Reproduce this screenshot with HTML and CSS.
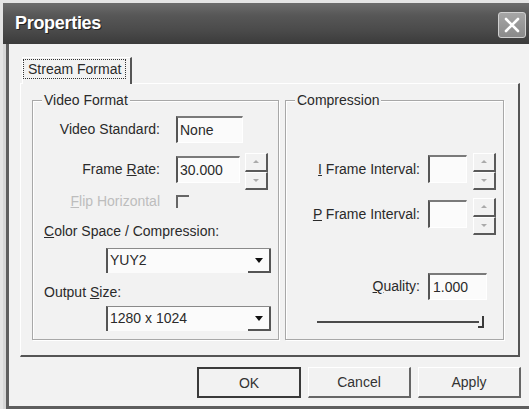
FILE: index.html
```html
<!DOCTYPE html>
<html>
<head>
<meta charset="utf-8">
<title>Properties</title>
<link rel="stylesheet" href="styles.css">
</head>
<body>
<div class="window">
  <div class="titlebar">
    <span class="title">Properties</span>
    <span class="close"><svg width="18" height="16" viewBox="0 0 18 16"><path d="M3 2 L15 14 M15 2 L3 14" stroke="#fff" stroke-width="2.6" stroke-linecap="round"/></svg></span>
  </div>
  <div class="client">
    <div class="tab"><span class="focus">Stream Format</span></div>
    <div class="panel">
      <div class="group video">
        <div class="group-title">Video Format</div>
        <div class="row r1"><span class="lbl">Video Standard:</span><span class="field f-std">None</span></div>
        <div class="row r2"><span class="lbl">Frame <u>R</u>ate:</span><span class="field f-rate">30.000</span><span class="spin"><span class="spin-btn"><i class="up"></i></span><span class="spin-btn"><i class="down"></i></span></span></div>
        <div class="row r3"><span class="lbl disabled"><u>F</u>lip Horizontal</span><span class="check"></span></div>
        <div class="caption c1"><u>C</u>olor Space / Compression:</div>
        <div class="combo k1"><span class="combo-text">YUY2</span><span class="combo-btn"><i></i></span></div>
        <div class="caption c2">Output <u>S</u>ize:</div>
        <div class="combo k2"><span class="combo-text">1280 x 1024</span><span class="combo-btn"><i></i></span></div>
      </div>
      <div class="group compression">
        <div class="group-title">Compression</div>
        <div class="row ri"><span class="lbl"><u>I</u> Frame Interval:</span><span class="field f-int"></span><span class="spin"><span class="spin-btn"><i class="up"></i></span><span class="spin-btn"><i class="down"></i></span></span></div>
        <div class="row rp"><span class="lbl"><u>P</u> Frame Interval:</span><span class="field f-int"></span><span class="spin"><span class="spin-btn"><i class="up"></i></span><span class="spin-btn"><i class="down"></i></span></span></div>
        <div class="row rq"><span class="lbl"><u>Q</u>uality:</span><span class="field f-q">1.000</span></div>
        <div class="slider"><svg width="172" height="14" viewBox="0 0 172 14"><path d="M0 7 H162" stroke="#4a4a4a" stroke-width="2"/><path d="M166 1 V12 H161" stroke="#3a3a3a" stroke-width="2" fill="none"/></svg></div>
      </div>
    </div>
    <div class="buttons">
      <span class="btn default">OK</span>
      <span class="btn">Cancel</span>
      <span class="btn">Apply</span>
    </div>
  </div>
</div>
</body>
</html>
```
FILE: styles.css
```css
html, body {
  margin: 0;
  padding: 0;
}
body {
  width: 529px;
  height: 409px;
  overflow: hidden;
  background: #e4e4e4;
  font-family: "Liberation Sans", Arial, sans-serif;
  font-size: 14px;
  color: #2a2a2a;
}
.window {
  margin: 3px 0 0 3px;
  width: 526px;
  height: 406px;
  display: flex;
  flex-direction: column;
  background: #d6d6d6;
}
.titlebar {
  height: 41px;
  flex: none;
  display: flex;
  align-items: center;
  justify-content: space-between;
  padding: 0 3px 0 12px;
  background: linear-gradient(#6c6c6c 0%, #575757 30%, #4b4b4b 65%, #3b3b3b 100%);
}
.title {
  color: #fff;
  font-weight: bold;
  font-size: 18px;
  letter-spacing: -0.3px;
  text-shadow: 1px 1px 0 #222;
}
.close {
  align-self: flex-start;
  margin-top: 9px;
  width: 28px;
  height: 26px;
  box-sizing: border-box;
  border: 1px solid #d0d0d0;
  border-radius: 3px;
  background: linear-gradient(#a6a6a6, #8a8a8a);
  display: flex;
  align-items: center;
  justify-content: center;
}
.client {
  flex: 1;
  margin-left: 3px;
  border-left: 3px solid #5e5e5e;
  border-bottom: 3px solid #5e5e5e;
  background: #f2f2f2;
}
.tab {
  position: relative;
  z-index: 1;
  margin: 13px 0 -1px 13px;
  width: 110px;
  height: 27px;
  box-sizing: border-box;
  border-top: 1px solid #fff;
  border-left: 1px solid #fff;
  border-right: 2px solid #555;
  background: #f2f2f2;
  padding-top: 1px;
}
.focus {
  display: inline-block;
  border: 1px dotted #333;
  padding: 0 4px;
  line-height: 18px;
}
.panel {
  margin-left: 11px;
  width: 500px;
  height: 274px;
  box-sizing: border-box;
  border-top: 1px solid #fff;
  border-left: 1px solid #fff;
  border-right: 2px solid #555;
  border-bottom: 2px solid #555;
  padding: 16px 0 0 11px;
  display: flex;
  align-items: flex-start;
  gap: 6px;
}
.group {
  box-sizing: border-box;
  height: 240px;
  border: 1px solid #a8a8a8;
  box-shadow: inset 1px 1px 0 #fff, 1px 1px 0 #fff;
}
.video { width: 247px; }
.compression { width: 219px; }
.group-title {
  margin: -9px 0 0 9px;
  padding: 0 2px;
  width: max-content;
  line-height: 16px;
  background: #f2f2f2;
}
.row {
  display: flex;
  align-items: flex-start;
}
.lbl {
  text-align: right;
  line-height: 27px;
  white-space: nowrap;
}
.video .lbl {
  width: 127px;
  margin-right: 16px;
}
.compression .lbl {
  width: 134px;
  margin-right: 8px;
}
.field {
  box-sizing: border-box;
  height: 27px;
  border-top: 2px solid #7a7a7a;
  border-left: 2px solid #555;
  border-right: 1px solid #fff;
  border-bottom: 1px solid #fff;
  background: #fbfbfb;
  padding-left: 2px;
  line-height: 24px;
}
.r1 { margin-top: 8px; }
.f-std { width: 67px; }
.r2 { margin-top: 10px; height: 37px; }
.r2 .lbl, .ri .lbl, .rp .lbl { margin-top: 3px; }
.f-rate { width: 64px; margin-top: 3px; }
.spin {
  width: 23px;
  height: 37px;
  margin-left: 5px;
  display: flex;
  flex-direction: column;
}
.spin-btn {
  flex: 1;
  box-sizing: border-box;
  border-top: 1px solid #fff;
  border-left: 1px solid #fff;
  border-right: 2px solid #5a5a5a;
  border-bottom: 2px solid #5a5a5a;
  display: flex;
  align-items: center;
  justify-content: center;
}
.spin-btn i {
  width: 0;
  height: 0;
  border-left: 3px solid transparent;
  border-right: 3px solid transparent;
}
.spin-btn i.up { border-bottom: 3px solid #aaa; }
.spin-btn i.down { border-top: 3px solid #aaa; }
.r3 { margin-top: 5px; }
.r3 .lbl { line-height: 13px; }
.disabled { color: #bdbdbd; }
.check {
  width: 13px;
  height: 13px;
  box-sizing: border-box;
  border-top: 2px solid #666;
  border-left: 2px solid #666;
}
.caption {
  margin-left: 11px;
  line-height: 16px;
}
.c1 { margin-top: 15px; }
.c2 { margin-top: 11px; }
.combo {
  display: flex;
  width: 165px;
  height: 25px;
  box-sizing: border-box;
  margin-left: 73px;
  border-left: 2px solid #555;
  border-top: 1px solid #8a8a8a;
  background: #fbfbfb;
}
.k1 { margin-top: 9px; }
.k2 { margin-top: 6px; }
.combo-text {
  flex: 1;
  padding-left: 2px;
  line-height: 23px;
}
.combo-btn {
  width: 23px;
  box-sizing: border-box;
  border-right: 2px solid #555;
  border-bottom: 2px solid #555;
  display: flex;
  align-items: center;
  justify-content: center;
}
.combo-btn i {
  width: 0;
  height: 0;
  border-left: 4px solid transparent;
  border-right: 4px solid transparent;
  border-top: 5px solid #111;
}
.ri { margin-top: 45px; height: 37px; }
.rp { margin-top: 8px; height: 37px; }
.f-int { width: 39px; height: 28px; margin-top: 2px; }
.compression .spin { margin-left: 6px; }
.rq { margin-top: 38px; }
.f-q { width: 59px; padding-left: 3px; }
.slider {
  margin: 15px 0 0 31px;
  height: 14px;
}
.slider svg { display: block; }
.buttons {
  display: flex;
  justify-content: flex-end;
  gap: 7px;
  margin-top: 10px;
  padding-right: 8px;
}
.btn {
  width: 103px;
  height: 31px;
  box-sizing: border-box;
  border-top: 1px solid #fff;
  border-left: 1px solid #fff;
  border-right: 2px solid #666;
  border-bottom: 2px solid #666;
  display: flex;
  align-items: center;
  justify-content: center;
  color: #333;
}
.btn.default {
  width: 104px;
  border: 2px solid #3a3a3a;
}
```
